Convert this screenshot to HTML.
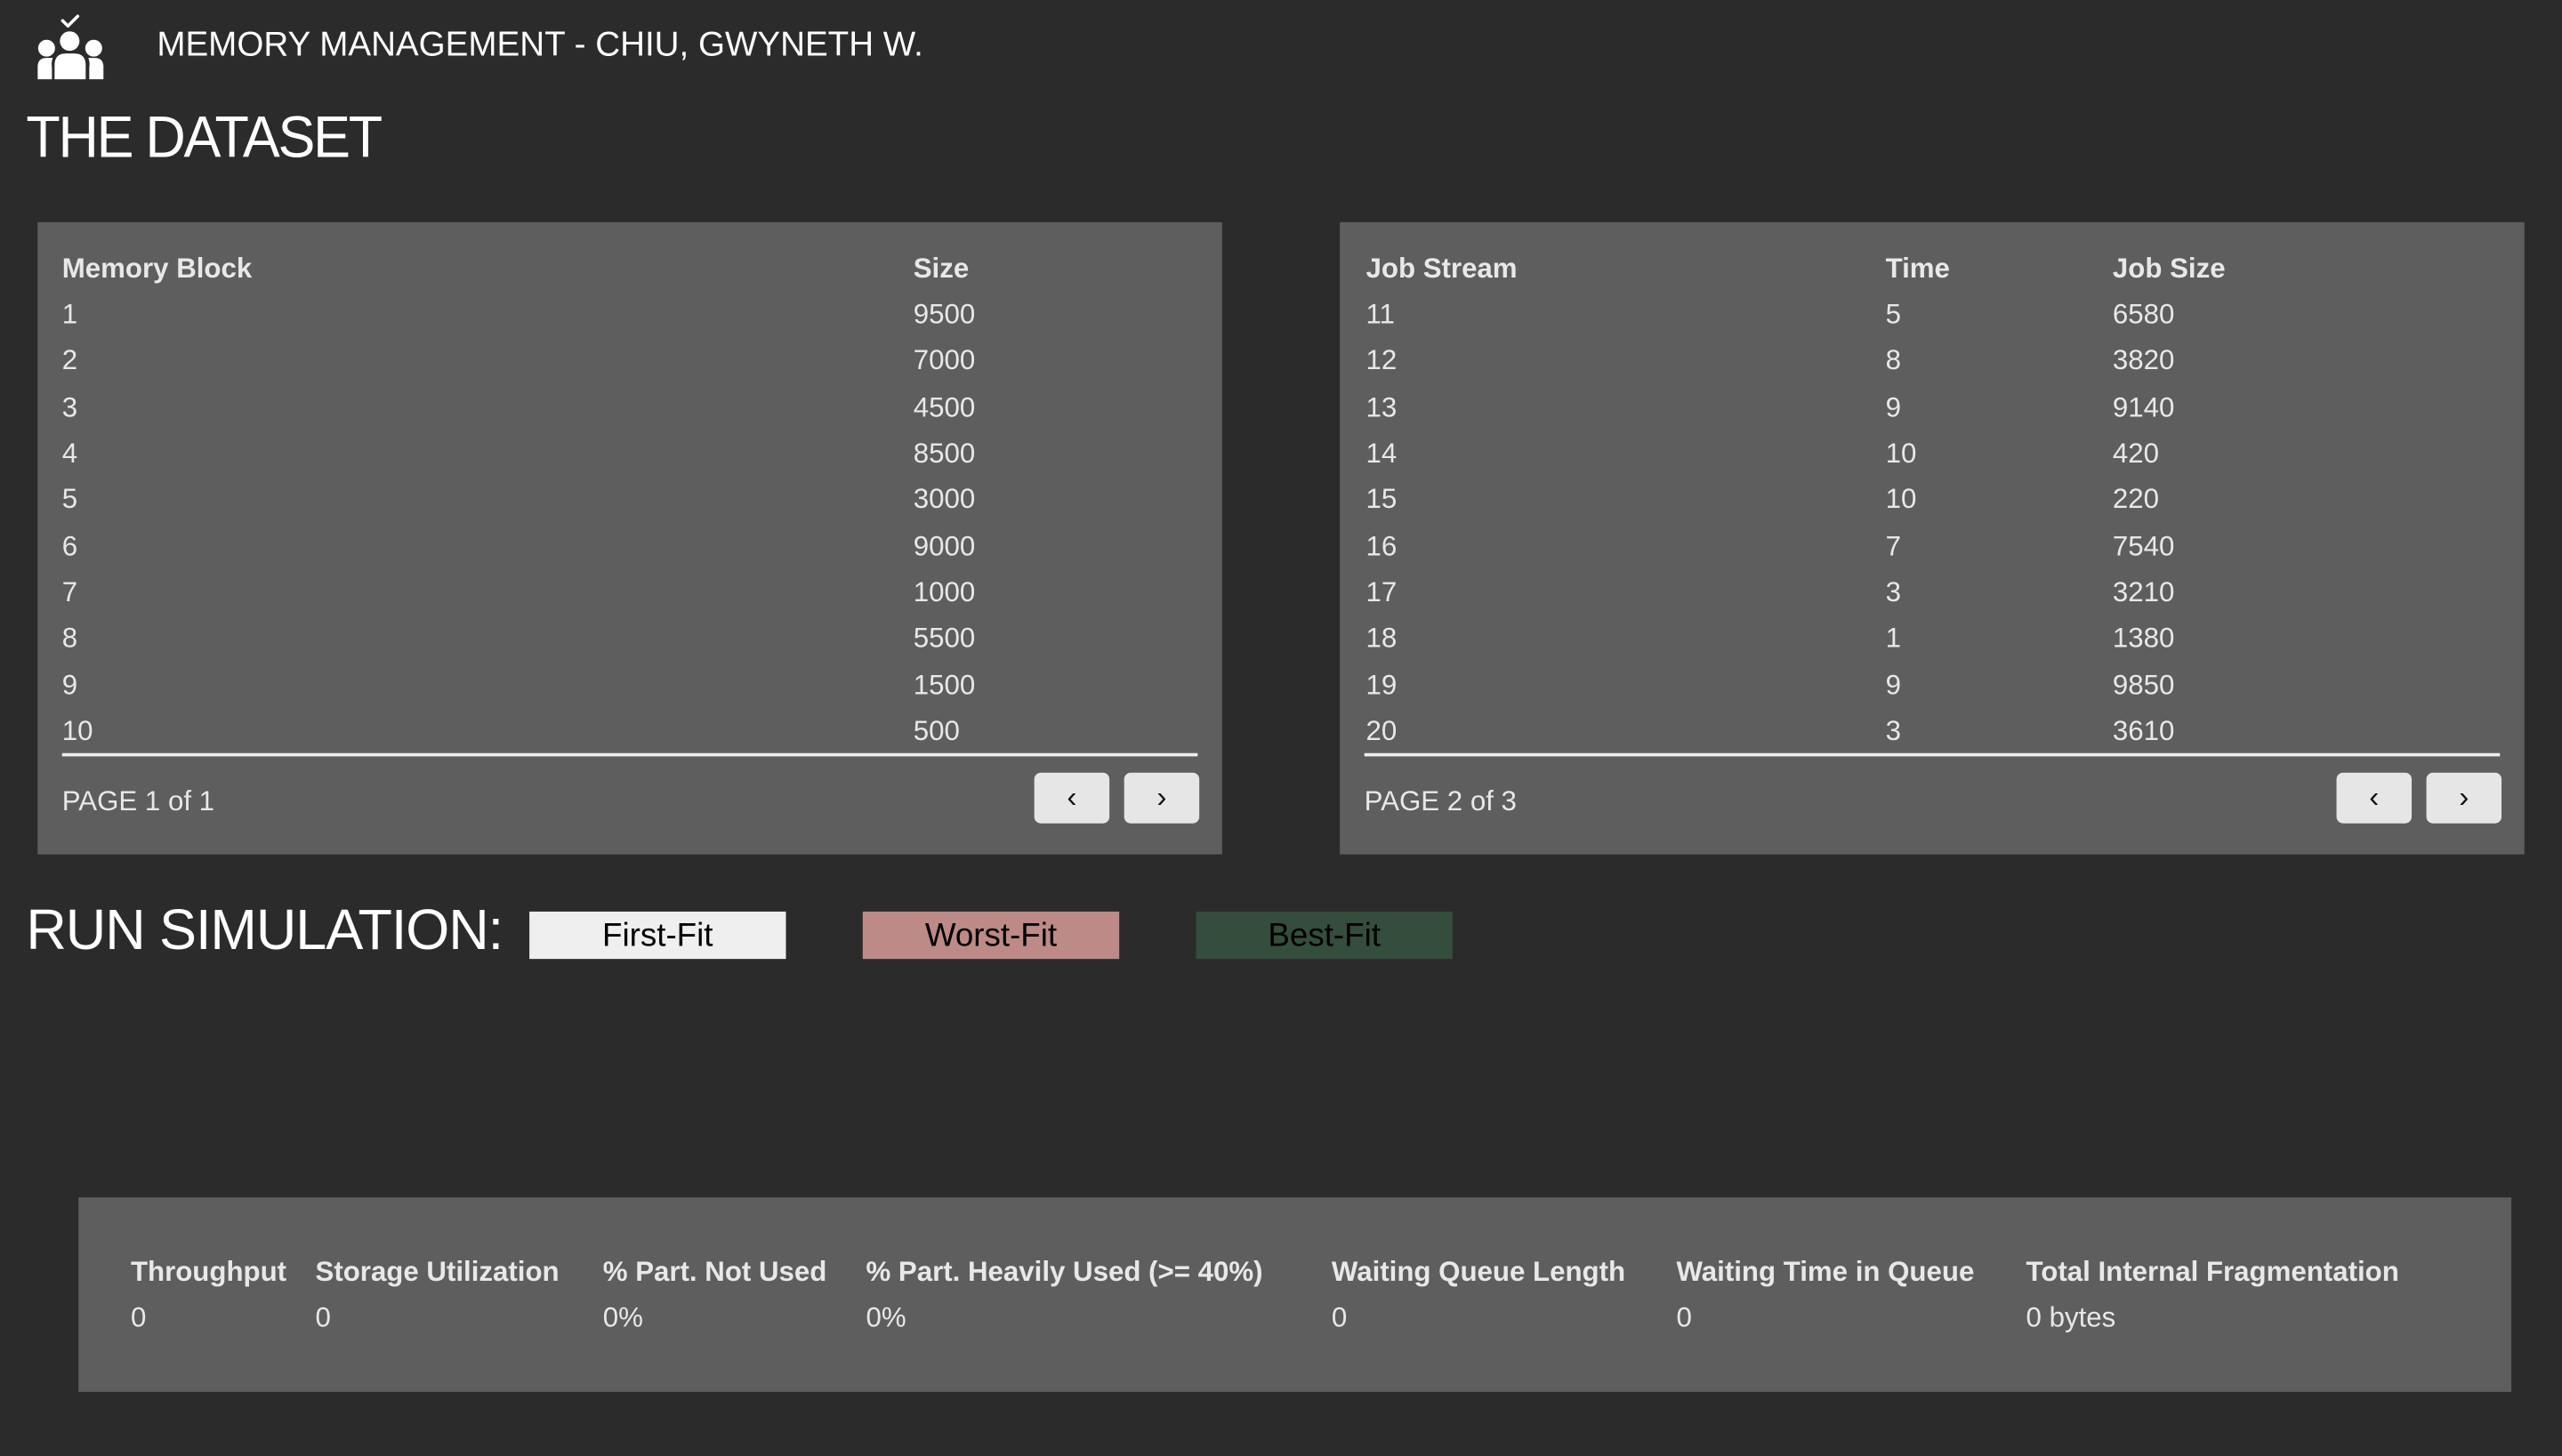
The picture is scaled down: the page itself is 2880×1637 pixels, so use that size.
<!DOCTYPE html>
<html><head><meta charset="utf-8"><style>
html,body{margin:0;padding:0;background:#2b2b2b;width:2880px;height:1636px;overflow:hidden}
#w{position:absolute;left:0;top:0;width:1568px;height:891px;transform:scale(1.83673);transform-origin:0 0;font-family:"Liberation Sans",sans-serif;color:#e8e8e8}
.a{position:absolute;white-space:nowrap}
.t{height:22px;line-height:22px;font-size:17px}
.b{font-weight:bold}
.p{position:absolute;background:#5e5e5e}
.btn{position:absolute;background:#e6e6e6;border-radius:4px;width:46px;height:31px;top:473px;color:#111;font-size:18px;text-align:center;line-height:30px}
.line{position:absolute;height:2px;background:#eeeeee;top:461px}
.rb{position:absolute;top:558px;width:157px;height:29px;line-height:31px;text-align:center;font-size:20px;color:#000}
</style></head><body><div id="w">
<svg class="a" style="left:16.3px;top:5.4px" width="54.4" height="49" viewBox="0 0 100 90" fill="#fff">
<polyline points="41,14 47,20 58,9" fill="none" stroke="#fff" stroke-width="3.5" stroke-linecap="round" stroke-linejoin="round"/>
<circle cx="49" cy="37" r="11"/>
<circle cx="23" cy="45" r="9.5"/>
<circle cx="76" cy="45" r="9.5"/>
<path d="M32 80 L32 64 Q32 51 45 51 L54 51 Q67 51 67 64 L67 80 Z"/>
<path d="M13 80 L13 66 Q13 56 23 56 L30 56 Q28 61 29 67 L29 80 Z"/>
<path d="M87 80 L87 66 Q87 56 77 56 L70 56 Q72 61 71 67 L71 80 Z"/>
</svg>
<div class="a" style="left:96px;top:15px;font-size:21px;line-height:26px;color:#fff">MEMORY MANAGEMENT - CHIU, GWYNETH W.</div>
<div class="a" style="left:16px;top:63px;font-size:36px;line-height:42px;color:#fff;letter-spacing:-1.3px;transform:scaleX(0.95);transform-origin:0 0">THE DATASET</div>

<div class="p" style="left:23px;top:136px;width:725px;height:387px"></div>
<div class="p" style="left:820px;top:136px;width:725px;height:387px"></div>
<div class="line" style="left:38px;width:695px"></div>
<div class="line" style="left:835px;width:695px"></div>
<div class="btn" style="left:633px">&#x2039;</div><div class="btn" style="left:688px">&#x203A;</div>
<div class="btn" style="left:1430px">&#x2039;</div><div class="btn" style="left:1485px">&#x203A;</div>
<div class="a t" style="left:38px;top:480px">PAGE 1 of 1</div>
<div class="a t" style="left:835px;top:480px">PAGE 2 of 3</div>

<div class="a t b" style="left:38px;top:154px">Memory Block</div>
<div class="a t b" style="left:559px;top:154px">Size</div>
<div class="a t b" style="left:836px;top:154px">Job Stream</div>
<div class="a t b" style="left:1154px;top:154px">Time</div>
<div class="a t b" style="left:1293px;top:154px">Job Size</div>

<div class="a t" style="left:38px;top:179px;line-height:28.35px;white-space:pre">1
2
3
4
5
6
7
8
9
10</div>
<div class="a t" style="left:559px;top:179px;line-height:28.35px;white-space:pre">9500
7000
4500
8500
3000
9000
1000
5500
1500
500</div>
<div class="a t" style="left:836px;top:179px;line-height:28.35px;white-space:pre">11
12
13
14
15
16
17
18
19
20</div>
<div class="a t" style="left:1154px;top:179px;line-height:28.35px;white-space:pre">5
8
9
10
10
7
3
1
9
3</div>
<div class="a t" style="left:1293px;top:179px;line-height:28.35px;white-space:pre">6580
3820
9140
420
220
7540
3210
1380
9850
3610</div>

<div class="a" style="left:16px;top:549px;font-size:35px;line-height:42px;color:#fff;letter-spacing:-0.6px;transform:scaleX(0.98);transform-origin:0 0">RUN SIMULATION:</div>
<div class="rb" style="left:324px;background:#efefef">First-Fit</div>
<div class="rb" style="left:528px;background:#bd8a87">Worst-Fit</div>
<div class="rb" style="left:732px;background:#344d3c">Best-Fit</div>

<div class="p" style="left:48px;top:733px;width:1489px;height:119px"></div>
<div class="a t b" style="left:80px;top:768px">Throughput</div><div class="a t" style="left:80px;top:796px">0</div>
<div class="a t b" style="left:193px;top:768px">Storage Utilization</div><div class="a t" style="left:193px;top:796px">0</div>
<div class="a t b" style="left:369px;top:768px">% Part. Not Used</div><div class="a t" style="left:369px;top:796px">0%</div>
<div class="a t b" style="left:530px;top:768px">% Part. Heavily Used (&gt;= 40%)</div><div class="a t" style="left:530px;top:796px">0%</div>
<div class="a t b" style="left:815px;top:768px">Waiting Queue Length</div><div class="a t" style="left:815px;top:796px">0</div>
<div class="a t b" style="left:1026px;top:768px">Waiting Time in Queue</div><div class="a t" style="left:1026px;top:796px">0</div>
<div class="a t b" style="left:1240px;top:768px">Total Internal Fragmentation</div><div class="a t" style="left:1240px;top:796px">0 bytes</div>
</div></body></html>
